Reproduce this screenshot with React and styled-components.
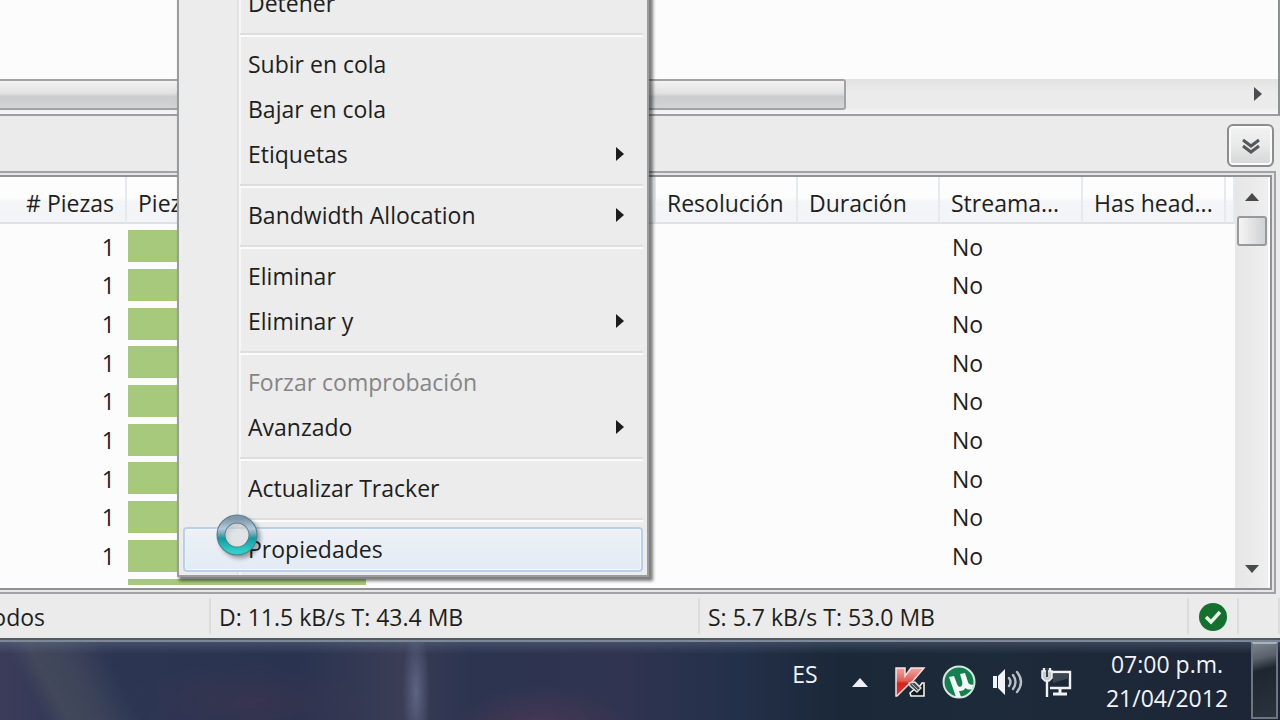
import { Fragment } from 'react';
import styled, { createGlobalStyle } from 'styled-components';

const GlobalStyle = createGlobalStyle`
  * {
    box-sizing: border-box;
  }

  body {
    margin: 0;
    overflow: hidden;
    background: #fdfdfd;
  }

  body, button {
    font-family: "Open Sans", "Noto Sans", sans-serif;
    font-size: 23px;
    color: #1e1e20;
  }

  button {
    padding: 0;
    border: none;
    background: none;
  }
`;

const Page = styled.div`
  position: relative;
  display: flex;
  flex-direction: column;
  height: 100vh;
  overflow: hidden;
  background: #ebebeb;
`;

const TorrentList = styled.div`
  height: 116px;
  display: flex;
  flex-direction: column;
  justify-content: flex-end;
  background: #fdfcfd;
  border-right: 2px solid #8f9194;
  border-bottom: 2px solid #9c9ea1;
`;

const HorizontalScroll = styled.div`
  display: flex;
  align-items: flex-start;
  justify-content: space-between;
  height: 35px;
  padding-right: 15px;
  background: linear-gradient(#e2e2e2, #ebebec 12px, #ebebec 28px, #f6f6f6);
`;

const HorizontalThumb = styled.div`
  width: 67%;
  height: 31px;
  border: 2px solid #a0a2a4;
  border-left: none;
  border-radius: 0 3px 3px 0;
  background: linear-gradient(#f3f3f3, #e2e2e3 45%, #c9cbcc 58%, #d3d5d6);
`;

const ArrowButton = styled.button`
  display: flex;
  align-items: center;
  justify-content: center;
  height: 30px;
`;

const Splitter = styled.div`
  display: flex;
  justify-content: flex-end;
  align-items: center;
  height: 55px;
  padding: 4px 6px 0 0;
`;

const CollapseButton = styled.button`
  display: flex;
  align-items: center;
  justify-content: center;
  width: 47px;
  height: 43px;
  border: 2px solid #8b8d8f;
  border-radius: 6px;
  box-shadow: inset 0 0 0 2px #fafafa;
  background: linear-gradient(#f3f3f3, #e9e9e9 50%, #d5d6d7);
`;

const DetailPanel = styled.div`
  margin-right: 4px;
  padding: 2px 2px 2px 0;
  border: 2px solid #a0a2a5;
  border-left: none;
  background: #e6e6e6;
`;

const DetailInner = styled.div`
  display: flex;
  height: 415px;
  padding-right: 2px;
  overflow: hidden;
  border: 2px solid #909295;
  border-left: none;
  background: #fdfcfd;
`;

const TableArea = styled.div`
  flex: 1;
  overflow: hidden;
`;

const FileTable = styled.table`
  width: 100%;
  height: 395px;
  table-layout: fixed;
  border-collapse: separate;
  border-spacing: 0;
`;

const HeadCell = styled.th`
  width: ${(p) => p.$width};
  height: 47px;
  padding: 6px 11px 0;
  font-weight: 400;
  line-height: 30px;
  text-align: ${(p) => p.$align || 'left'};
  white-space: nowrap;
  border-right: 2px solid #e6e9ed;
  border-bottom: 2px solid #dfe1e4;
  background: linear-gradient(#fdfdfd 45%, #f3f5f8 55%, #f3f4f6);
`;

const Cell = styled.td`
  padding: ${(p) => (p.$bar ? '6px 0 0' : '7px 12px 0')};
  line-height: 30px;
  text-align: ${(p) => p.$align || 'left'};
`;

const PieceBar = styled.div`
  height: 32px;
  margin-left: 1px;
  margin-right: 3px;
  background: #a7c97c;
`;

const NextRow = styled.div`
  display: flex;
  padding: 7px 0 3px 127px;

  ${PieceBar} {
    width: 238px;
    height: 6px;
    margin-right: 0;
  }
`;

const VerticalScroll = styled.div`
  display: flex;
  flex-direction: column;
  align-items: center;
  justify-content: space-between;
  width: 33px;
  padding: 5px 0 4px;
  background: linear-gradient(90deg, #e6e6e6, #efefef);
`;

const VerticalThumb = styled.div`
  width: 30px;
  height: 30px;
  margin-top: 4px;
  border: 2px solid #97999b;
  border-radius: 3px;
  background: linear-gradient(90deg, #f5f5f5, #e3e3e4 50%, #cfd1d2);
`;

const StatusBar = styled.div`
  display: flex;
  height: 46px;
  padding: 4px 0 4px;
  border-bottom: 2px solid #55585e;
  background: #ebebeb;
`;

const StatusCell = styled.div`
  display: flex;
  align-items: center;
  flex: ${(p) => (p.$width ? `0 0 ${p.$width}` : '1')};
  justify-content: ${(p) => (p.$center ? 'center' : 'flex-start')};
  padding-top: 2px;
  padding-left: ${(p) => p.$pad || '0'};
  white-space: nowrap;
  border-right: 2px solid #dcdcdd;
`;

const ClippedLabel = styled.span`
  display: flex;
  justify-content: flex-end;
  width: 45px;
  overflow: hidden;
`;

const Taskbar = styled.div`
  display: flex;
  flex: 1;
  justify-content: flex-end;
  overflow: hidden;
  color: #f2f4f7;
  border-top: 2px solid #7c8798;
  background:
    linear-gradient(rgba(110, 125, 150, 0.35), transparent 12px),
    radial-gradient(ellipse 90px 40px at 540px 84px, rgba(90, 58, 84, 0.6), transparent),
    radial-gradient(ellipse 14px 70px at 416px 50px, rgba(105, 113, 145, 0.75), transparent),
    radial-gradient(ellipse 120px 40px at 250px 60px, rgba(70, 52, 78, 0.45), transparent),
    linear-gradient(62deg, transparent 40px, rgba(70, 76, 92, 0.8) 60px, rgba(70, 76, 92, 0.6) 90px, transparent 125px),
    linear-gradient(90deg, #3b3c5a, #2c3653 110px, #2a3350 300px, #3a3d55 400px, #2c3450 470px, #303450 620px, #233049 740px, #1a2838 840px, #1d2a3a 1000px, #1c2535);
`;

const Language = styled.button`
  align-self: flex-start;
  width: 28px;
  margin: 17px 33px 0 0;
  color: inherit;
  line-height: 30px;
`;

const Tray = styled.div`
  display: flex;
  align-items: center;
  gap: 17px;
  padding-top: 1px;
`;

const TrayButton = styled.button`
  display: flex;
  justify-content: center;
  width: 32px;

  svg {
    flex: none;
  }
`;

const ExpandButton = styled(TrayButton)`
  width: 16px;
  margin-right: 9px;
`;

const Clock = styled.time`
  width: 166px;
  margin-left: 12px;
  padding-top: 5px;
  padding-right: 2px;
  line-height: 34px;
  text-align: center;
`;

const ShowDesktop = styled.button`
  width: 27px;
  height: 77px;
  margin-right: 2px;
  border: 2px solid #6c7682;
  border-top-color: #a9b1ba;
  background: linear-gradient(165deg, #7b838f, #59616d 20%, #1e2630 36%, #2a333d);
`;

const Menu = styled.div`
  position: absolute;
  top: -24px;
  left: 177px;
  width: 472px;
  padding: 3px 4px;
  border: 2px solid #9a9c9e;
  background: linear-gradient(90deg, #ececec 58px, #e2e2e2 58px, #e2e2e2 60px, #f8f8f8 60px, #f8f8f8 62px, #ececec 62px);
  box-shadow: 3px 3px 3px 1px rgba(0, 0, 0, 0.5);
`;

const MenuItem = styled.button`
  display: flex;
  align-items: center;
  justify-content: space-between;
  width: 100%;
  height: 45px;
  padding: 0 16px 2px 63px;
  line-height: 30px;
  text-align: left;
  border: 2px solid transparent;
  border-radius: 4px;

  &:disabled {
    color: #858585;
  }

  ${(p) =>
    p.$active &&
    `
    border-color: #b9d0ec;
    background: linear-gradient(#eef1f5, #e2ebf6);
    box-shadow: inset 0 0 0 1px #f3f7fc;
  `}
`;

const Separator = styled.hr`
  height: 4px;
  margin: 7px 0 5px 57px;
  border: none;
  border-top: 2px solid #dedede;
  border-bottom: 2px solid #fbfbfb;
`;

const BusyCursor = styled.svg`
  position: absolute;
  top: 512px;
  left: 214px;
  filter: drop-shadow(3px 3px 2px rgba(0, 0, 0, 0.35));
`;

const columns = [
  { label: '# Piezas', width: '127px', align: 'right' },
  { label: 'Piezas', width: '242px' },
  { label: '', width: '287px' },
  { label: 'Resolución', width: '142px' },
  { label: 'Duración', width: '142px' },
  { label: 'Streama...', width: '143px' },
  { label: 'Has head...', width: '143px' },
  { label: '' },
];

const rows = Array.from({ length: 9 }, (_, i) => ({ id: i, pieces: 1, streamable: 'No' }));

const menuGroups = [
  [{ label: 'Detener' }],
  [{ label: 'Subir en cola' }, { label: 'Bajar en cola' }, { label: 'Etiquetas', sub: true }],
  [{ label: 'Bandwidth Allocation', sub: true }],
  [{ label: 'Eliminar' }, { label: 'Eliminar y', sub: true }],
  [{ label: 'Forzar comprobación', disabled: true }, { label: 'Avanzado', sub: true }],
  [{ label: 'Actualizar Tracker' }],
  [{ label: 'Propiedades', active: true }],
];

const RightArrow = ({ color = '#1c1c1c' }) => (
  <svg width="10" height="16" viewBox="0 0 10 16">
    <path d="M1 1 L9 8 L1 15 Z" fill={color} />
  </svg>
);

const ContextMenu = () => (
  <Menu role="menu">
    {menuGroups.map((group, index) => (
      <Fragment key={group[0].label}>
        {index > 0 && <Separator />}
        {group.map((item) => (
          <MenuItem key={item.label} role="menuitem" disabled={item.disabled} $active={item.active}>
            {item.label}
            {item.sub && <RightArrow />}
          </MenuItem>
        ))}
      </Fragment>
    ))}
  </Menu>
);

const Files = () => (
  <FileTable>
    <thead>
      <tr>
        {columns.map((col, i) => (
          <HeadCell key={i} $width={col.width} $align={col.align}>{col.label}</HeadCell>
        ))}
      </tr>
    </thead>
    <tbody>
      {rows.map((row) => (
        <tr key={row.id}>
          <Cell $align="right">{row.pieces}</Cell>
          <Cell $bar><PieceBar /></Cell>
          <Cell />
          <Cell />
          <Cell />
          <Cell>{row.streamable}</Cell>
          <Cell />
          <Cell />
        </tr>
      ))}
    </tbody>
  </FileTable>
);

const KasperskyIcon = () => (
  <svg width="32" height="32" viewBox="0 0 32 32">
    <defs>
      <linearGradient id="kred" x1="0" y1="0" x2="0" y2="1">
        <stop offset="0" stopColor="#f0a6a2" />
        <stop offset="0.45" stopColor="#e0605a" />
        <stop offset="0.55" stopColor="#d8201c" />
        <stop offset="1" stopColor="#d93a33" />
      </linearGradient>
    </defs>
    <path d="M2 2 H11 V10 L17 2 H30 L19 15 L15 18 L3 30 H2 Z" fill="url(#kred)" stroke="#f6e4e2" strokeWidth="1.5" />
    <path d="M16 27 L22 22 L26 20 L28 17 H30 V30 H17 Z" fill="#15181c" stroke="#f1f1ee" strokeWidth="1.6" />
    <path d="M15 17 L21 16 L27 22 L23 26 L16 20 Z" fill="#4a4f52" stroke="#dcdfdb" strokeWidth="1.3" />
    <path d="M18 18 L24 24 M21 17 L26 22" stroke="#b9bdb9" strokeWidth="1" />
  </svg>
);

const UtorrentIcon = () => (
  <svg width="34" height="34" viewBox="0 0 34 34">
    <circle cx="17" cy="17" r="15.5" fill="#14804f" stroke="#d7e8df" strokeWidth="2" />
    <path d="M7 12 L12 11 L15 19 Q16.500 23 19 21.500 Q21 20 20 16 L18 9 L23 8 L26 17 Q27 20.500 31.500 19.500 L30 24 Q26 25.500 23.500 23 Q21.500 26.500 17 26 L19 32 L14 32 Z" fill="#f4faf7" />
  </svg>
);

const SpeakerIcon = () => (
  <svg width="32" height="32" viewBox="0 0 32 32" fill="none">
    <path d="M1 10 H5 V22 H1 Z M6 10 L13 3 V29 L6 22 Z" fill="#f1f3f5" />
    <path d="M17 12 Q20 16 17 20 M21 9 Q26 16 21 23 M25 6 Q33 16 25 26" stroke="#b7bec6" strokeWidth="2.4" strokeLinecap="round" />
  </svg>
);

const NetworkIcon = () => (
  <svg width="32" height="32" viewBox="0 0 32 32" fill="none">
    <path d="M11 6 H29 V22 H9" stroke="#f0f2f4" strokeWidth="2.4" />
    <path d="M12 8 H28 V12 L12 17 Z" fill="#3d4650" />
    <path d="M19 23 V27 M12 28 H26" stroke="#f0f2f4" strokeWidth="3" />
    <path d="M1 5 H11 V12 L8 15 H4 L1 12 Z" fill="#c9cdd1" stroke="#f0f2f4" strokeWidth="1.5" />
    <path d="M3 2 V5 M9 2 V5 M6 15 V31" stroke="#f0f2f4" strokeWidth="2.4" />
    <path d="M6 2 V11" stroke="#39424c" strokeWidth="2" />
  </svg>
);

const App = () => (
  <>
    <GlobalStyle />
    <Page>
      <TorrentList>
        <HorizontalScroll>
          <HorizontalThumb />
          <ArrowButton aria-label="Desplazar a la derecha">
            <RightArrow color="#4b4d50" />
          </ArrowButton>
        </HorizontalScroll>
      </TorrentList>

      <Splitter>
        <CollapseButton aria-label="Contraer panel">
          <svg width="20" height="20" viewBox="0 0 20 20" fill="none" stroke="#55575a" strokeWidth="3">
            <path d="M2 4 L10 10 L18 4 M2 10 L10 16 L18 10" />
          </svg>
        </CollapseButton>
      </Splitter>

      <DetailPanel>
        <DetailInner>
          <TableArea>
            <Files />
            <NextRow><PieceBar /></NextRow>
          </TableArea>
          <VerticalScroll>
            <div>
              <ArrowButton aria-label="Subir">
                <svg width="30" height="10" viewBox="0 0 30 10">
                  <path d="M8 9 L15 1 L22 9 Z" fill="#47494c" />
                </svg>
              </ArrowButton>
              <VerticalThumb />
            </div>
            <ArrowButton aria-label="Bajar">
              <svg width="16" height="10" viewBox="0 0 16 10">
                <path d="M1 1 H15 L8 9 Z" fill="#47494c" />
              </svg>
            </ArrowButton>
          </VerticalScroll>
        </DetailInner>
      </DetailPanel>

      <StatusBar>
        <StatusCell $width="211px"><ClippedLabel>Todos</ClippedLabel></StatusCell>
        <StatusCell $pad="8px">D: 11.5 kB/s T: 43.4 MB</StatusCell>
        <StatusCell $pad="8px">S: 5.7 kB/s T: 53.0 MB</StatusCell>
        <StatusCell $width="50px" $center>
          <svg width="30" height="30" viewBox="0 0 30 30" fill="none">
            <circle cx="15" cy="15" r="14" fill="#14702f" />
            <path d="M8 15 L13 20 L22 10" stroke="#e8f3e4" strokeWidth="3.5" />
          </svg>
        </StatusCell>
        <StatusCell $width="41px" />
      </StatusBar>

      <Taskbar>
        <Language>ES</Language>
        <Tray>
          <ExpandButton aria-label="Mostrar iconos ocultos">
            <svg width="16" height="10" viewBox="0 0 16 10">
              <path d="M0 10 L8 1 L16 10 Z" fill="#eef1f5" />
            </svg>
          </ExpandButton>
          <TrayButton aria-label="Kaspersky"><KasperskyIcon /></TrayButton>
          <TrayButton aria-label="uTorrent"><UtorrentIcon /></TrayButton>
          <TrayButton aria-label="Volumen"><SpeakerIcon /></TrayButton>
          <TrayButton aria-label="Red"><NetworkIcon /></TrayButton>
        </Tray>
        <Clock>07:00 p.m.<br />21/04/2012</Clock>
        <ShowDesktop aria-label="Mostrar escritorio" />
      </Taskbar>

      <ContextMenu />
      <BusyCursor width="46" height="46" viewBox="0 0 46 46">
        <defs>
          <linearGradient id="ring" x1="0" y1="0" x2="0" y2="1">
            <stop offset="0" stopColor="#8298a8" />
            <stop offset="0.3" stopColor="#b4c8d9" />
            <stop offset="0.45" stopColor="#7fa9b8" />
            <stop offset="0.6" stopColor="#149a9f" />
            <stop offset="1" stopColor="#2fd0c6" />
          </linearGradient>
        </defs>
        <circle cx="23" cy="23" r="16" fill="rgba(255, 255, 255, 0.5)" stroke="#4d7f90" strokeWidth="9" />
        <circle cx="23" cy="23" r="16" fill="none" stroke="url(#ring)" strokeWidth="7" />
      </BusyCursor>
    </Page>
  </>
);

export default App;
